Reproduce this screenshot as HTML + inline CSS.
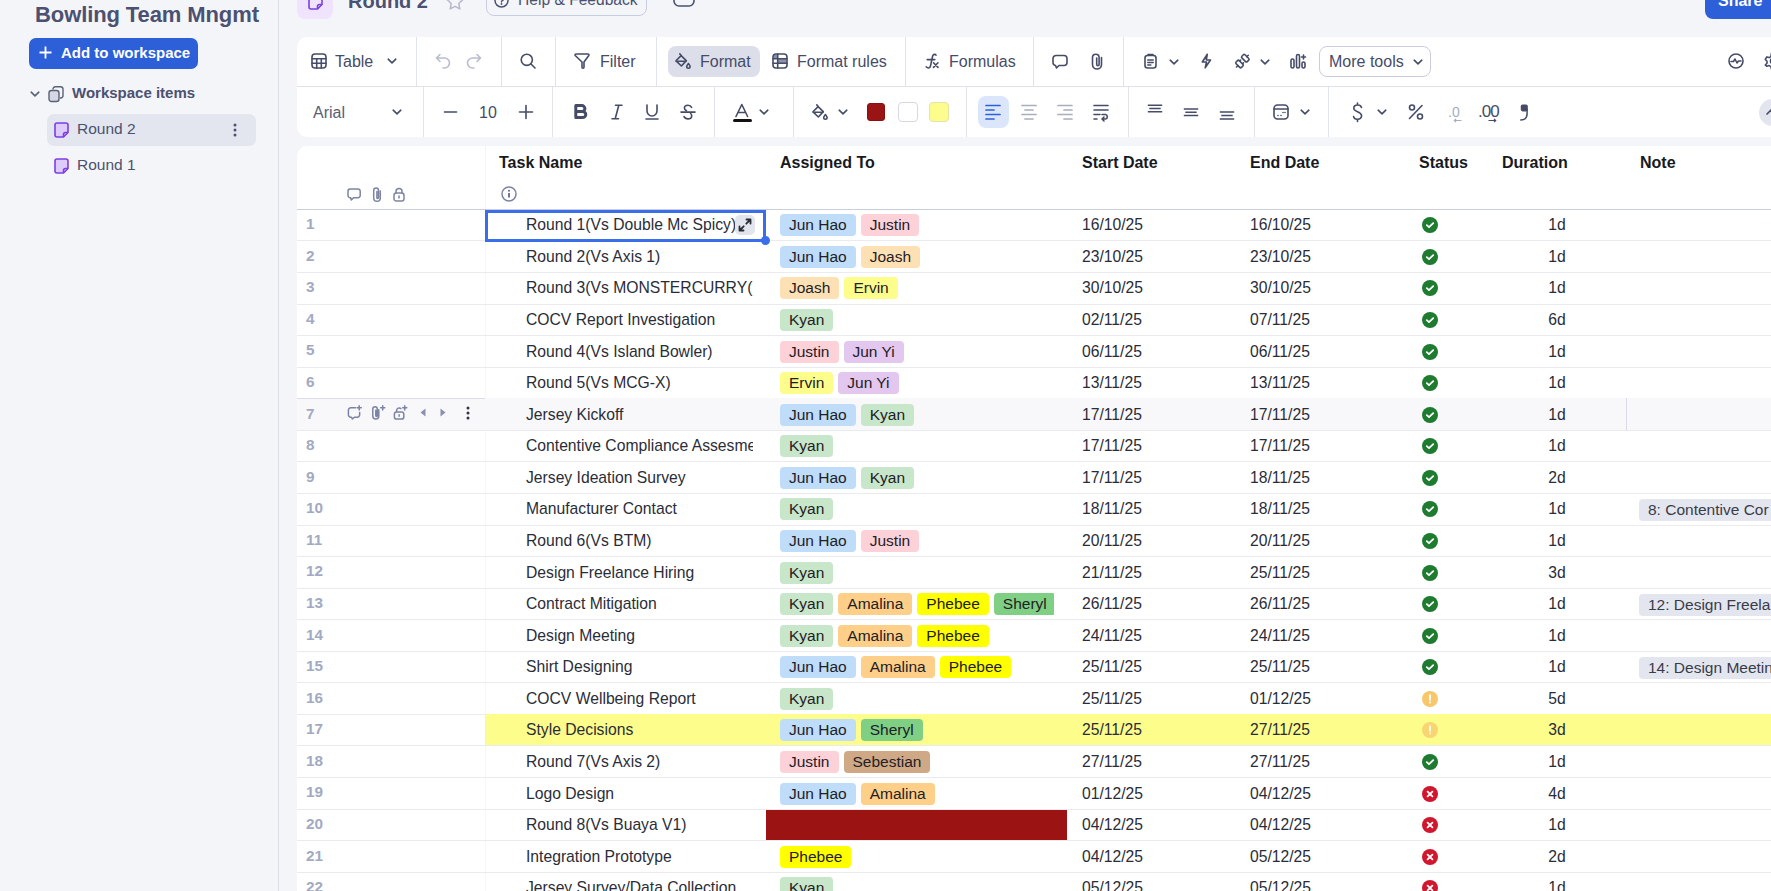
<!DOCTYPE html><html><head><meta charset="utf-8"><style>
*{box-sizing:border-box;margin:0;padding:0}
html,body{width:1771px;height:891px;overflow:hidden;background:#f4f5f9;font-family:"Liberation Sans",sans-serif;}
.a{position:absolute;white-space:nowrap}
.ic{position:absolute;overflow:visible}
.vd{position:absolute;width:1px;background:#e1e3ec}
.t16{font-size:16px;color:#464c68;line-height:20px}
.rn{position:absolute;white-space:nowrap;left:306px;font-size:15.3px;font-weight:700;color:#a4a9c2;line-height:16px}
.tk{position:absolute;left:526px;width:227px;overflow:hidden;white-space:nowrap;font-size:15.7px;color:#2a2d38;line-height:18px}
.dt{position:absolute;white-space:nowrap;font-size:15.7px;color:#2a2d38;line-height:18px}
.pill{position:absolute;height:22px;border-radius:4px;font-size:15.5px;line-height:22px;color:#1e2026;padding:0 9px;white-space:nowrap;overflow:hidden}
.jh{background:#bfdcf9}.ju{background:#fdd1d8}.jo{background:#fde0b4}.er{background:#fdfd8c}.ky{background:#c8e6c9}
.jy{background:#e3c7ef}.am{background:#fdcf88}.ph{background:#ffff00}.sh{background:#7fcf85}.se{background:#cfa885}
.hd{position:absolute;white-space:nowrap;top:153px;font-size:16px;font-weight:700;color:#171a22;line-height:20px}
.rl{position:absolute;left:297px;width:1474px;height:1px;background:#e9ebf1}
</style></head><body>
<div class="a" style="left:0;top:0;width:279px;height:891px;background:#f4f5f9;border-right:1px solid #dcdfe8"></div>
<div class="a" style="left:35px;top:2px;font-size:22px;font-weight:700;color:#4b5170;line-height:25px;letter-spacing:-0.1px">Bowling Team Mngmt</div>
<div class="a" style="left:29px;top:38px;width:169px;height:31px;border-radius:7px;background:#2c5fd8"></div>
<svg class="ic" style="left:39px;top:46px;width:13px;height:13px;" viewBox="0 0 13 13"><path d="M6.5 0.5v12M0.5 6.5h12" stroke="#fff" stroke-width="1.8"/></svg>
<div class="a" style="left:61px;top:44px;font-size:15px;font-weight:700;color:#fff;line-height:18px">Add to workspace</div>
<svg class="ic" style="left:30px;top:91px;width:10px;height:6px;" viewBox="0 0 10 6"><path d="M1.2 1.2l3.8 3.6 3.8-3.6" fill="none" stroke="#5a6078" stroke-width="1.6" stroke-linecap="round" stroke-linejoin="round"/></svg>
<svg class="ic" style="left:48px;top:86px;width:16px;height:16px;" viewBox="0 0 16 16"><rect x="1" y="4.5" width="10" height="11" rx="2.5" fill="#d5d8e3" stroke="#5a6078" stroke-width="1.4"/><path d="M5 3.5V3a2.2 2.2 0 0 1 2.2-2.2h5.3A2.5 2.5 0 0 1 15 3.3v6.4a2.3 2.3 0 0 1-2.3 2.3H12" fill="none" stroke="#5a6078" stroke-width="1.4"/></svg>
<div class="a" style="left:72px;top:84px;font-size:15px;font-weight:700;color:#4b5170;line-height:18px">Workspace items</div>
<div class="a" style="left:47px;top:114px;width:209px;height:32px;border-radius:7px;background:#e4e6ef"></div>
<svg class="ic" style="left:54px;top:122px;width:15px;height:16px;" viewBox="0 0 15 16"><path d="M3 1h9a2 2 0 0 1 2 2v7.5L9.5 15H3a2 2 0 0 1-2-2V3a2 2 0 0 1 2-2z" fill="#dccbfb" stroke="#7b3fe4" stroke-width="1.6"/><path d="M14 10.5h-2.5a2 2 0 0 0-2 2V15" fill="none" stroke="#7b3fe4" stroke-width="1.6"/></svg>
<div class="a" style="left:77px;top:120px;font-size:15.5px;color:#4b5170;line-height:18px">Round 2</div>
<svg class="ic" style="left:233px;top:123px;width:4px;height:14px;" viewBox="0 0 4 14"><circle cx="2" cy="2" r="1.5" fill="#4b5170"/><circle cx="2" cy="7" r="1.5" fill="#4b5170"/><circle cx="2" cy="12" r="1.5" fill="#4b5170"/></svg>
<svg class="ic" style="left:54px;top:158px;width:15px;height:16px;" viewBox="0 0 15 16"><path d="M3 1h9a2 2 0 0 1 2 2v7.5L9.5 15H3a2 2 0 0 1-2-2V3a2 2 0 0 1 2-2z" fill="#dccbfb" stroke="#7b3fe4" stroke-width="1.6"/><path d="M14 10.5h-2.5a2 2 0 0 0-2 2V15" fill="none" stroke="#7b3fe4" stroke-width="1.6"/></svg>
<div class="a" style="left:77px;top:156px;font-size:15.5px;color:#4b5170;line-height:18px">Round 1</div>
<div class="a" style="left:297px;top:-18px;width:36px;height:37px;border-radius:8px;background:#efe3fd"></div>
<svg class="ic" style="left:308px;top:-6px;width:15px;height:16px;" viewBox="0 0 15 16"><path d="M3 1h9a2 2 0 0 1 2 2v7.5L9.5 15H3a2 2 0 0 1-2-2V3a2 2 0 0 1 2-2z" fill="none" stroke="#7b3fe4" stroke-width="1.6"/><path d="M14 10.5h-2.5a2 2 0 0 0-2 2V15" fill="none" stroke="#7b3fe4" stroke-width="1.6"/></svg>
<div class="a" style="left:348px;top:-10.5px;font-size:20px;font-weight:700;color:#4b5170;line-height:23px">Round 2</div>
<svg class="ic" style="left:446px;top:-7px;width:18px;height:18px;" viewBox="0 0 18 18"><path d="M9 1l2.4 5 5.4.7-4 3.8 1 5.4L9 13.3 4.2 15.9l1-5.4-4-3.8 5.4-.7z" fill="none" stroke="#b5b9ca" stroke-width="1.5" stroke-linejoin="round"/></svg>
<div class="a" style="left:486px;top:-20px;width:161px;height:36px;border-radius:8px;border:1px solid #c9cde0"></div>
<svg class="ic" style="left:494px;top:-7px;width:15px;height:15px;" viewBox="0 0 15 15"><circle cx="7.5" cy="7.5" r="6.5" fill="none" stroke="#4b5170" stroke-width="1.5"/><path d="M5.5 5.8a2 2 0 1 1 2.8 1.8c-.6.3-.8.7-.8 1.4" fill="none" stroke="#4b5170" stroke-width="1.4" stroke-linecap="round"/><circle cx="7.5" cy="11" r=".9" fill="#4b5170"/></svg>
<div class="a" style="left:518px;top:-9.5px;font-size:15.6px;color:#4b5170;line-height:18px">Help &amp; Feedback</div>
<svg class="ic" style="left:673px;top:-10px;width:22px;height:17px;" viewBox="0 0 22 17"><rect x="1" y="1" width="20" height="15" rx="5" fill="none" stroke="#4b5170" stroke-width="1.6"/><path d="M7 6l4 3 4-3" fill="none" stroke="#4b5170" stroke-width="1.6"/></svg>
<div class="a" style="left:1705px;top:-20px;width:80px;height:39px;border-radius:8px;background:#2c5fd8"></div>
<div class="a" style="left:1718px;top:-8px;font-size:16px;font-weight:700;color:#fff;line-height:18px">Share</div>
<div class="a" style="left:297px;top:37px;width:1490px;height:100px;border-radius:10px;background:#fff"></div>
<div class="a" style="left:297px;top:86px;width:1474px;height:1px;background:#dfe2ec"></div>
<svg class="ic" style="left:311px;top:53px;width:16px;height:16px;" viewBox="0 0 16 16"><rect x="1" y="1" width="14" height="14" rx="3" fill="none" stroke="#464c68" stroke-width="1.6" stroke-linecap="round" stroke-linejoin="round"/><path d="M1 5.7h14M1 10.3h14M5.7 5.7V15M10.3 5.7V15" fill="none" stroke="#464c68" stroke-width="1.6" stroke-linecap="round" stroke-linejoin="round"/></svg>
<div class="a t16" style="left:335px;top:52px">Table</div>
<svg class="ic" style="left:387px;top:58px;width:10px;height:6px;" viewBox="0 0 10 6"><path d="M1.2 1.2l3.8 3.6 3.8-3.6" fill="none" stroke="#464c68" stroke-width="1.6" stroke-linecap="round" stroke-linejoin="round"/></svg>
<div class="vd" style="left:416px;top:37px;height:49px"></div>
<svg class="ic" style="left:435px;top:53px;width:16px;height:16px;" viewBox="0 0 16 16"><path d="M5 1.5L1.5 5 5 8.5M1.5 5h8a5 5 0 0 1 0 10H8" fill="none" stroke="#b9bdcb" stroke-width="1.6" stroke-linecap="round" stroke-linejoin="round"/></svg>
<svg class="ic" style="left:466px;top:53px;width:16px;height:16px;" viewBox="0 0 16 16"><path d="M11 1.5L14.5 5 11 8.5M14.5 5h-8a5 5 0 0 0 0 10H8" fill="none" stroke="#b9bdcb" stroke-width="1.6" stroke-linecap="round" stroke-linejoin="round"/></svg>
<div class="vd" style="left:501px;top:37px;height:49px"></div>
<svg class="ic" style="left:520px;top:53px;width:16px;height:16px;" viewBox="0 0 16 16"><circle cx="6.8" cy="6.8" r="5.6" fill="none" stroke="#464c68" stroke-width="1.6" stroke-linecap="round" stroke-linejoin="round"/><path d="M11 11l4 4" fill="none" stroke="#464c68" stroke-width="1.6" stroke-linecap="round" stroke-linejoin="round"/></svg>
<div class="vd" style="left:555px;top:37px;height:49px"></div>
<svg class="ic" style="left:574px;top:53px;width:16px;height:16px;" viewBox="0 0 16 16"><path d="M1.2 2.5a1 1 0 0 1 .9-1.5h11.8a1 1 0 0 1 .9 1.5L10 9v5.2a1 1 0 0 1-2 0V9z" fill="none" stroke="#464c68" stroke-width="1.6" stroke-linecap="round" stroke-linejoin="round"/></svg>
<div class="a t16" style="left:600px;top:52px">Filter</div>
<div class="vd" style="left:656px;top:37px;height:49px"></div>
<div class="a" style="left:668px;top:46px;width:92px;height:31px;border-radius:8px;background:#dcdfe9"></div>
<svg class="ic" style="left:675px;top:53px;width:17px;height:17px;" viewBox="0 0 17 17"><path d="M6.1 2.6L11.3 7.6 6.4 13 1 7.8z" fill="none" stroke="#464c68" stroke-width="1.6" stroke-linecap="round" stroke-linejoin="round"/><path d="M1.3 8.3h9.6M4.8 .9l1.4 1.6" fill="none" stroke="#464c68" stroke-width="1.6" stroke-linecap="round" stroke-linejoin="round"/><path d="M13.4 10.5c-.8 1.1-1.7 2.2-1.7 3.1a1.7 1.7 0 0 0 3.4 0c0-.9-.9-2-1.7-3.1z" fill="none" stroke="#464c68" stroke-width="1.6" stroke-linecap="round" stroke-linejoin="round" stroke-width="1.4"/></svg>
<div class="a t16" style="left:700px;top:52px">Format</div>
<svg class="ic" style="left:772px;top:53px;width:16px;height:16px;" viewBox="0 0 16 16"><rect x="1.5" y="1.5" width="4.2" height="4.2" fill="#8d92aa"/><rect x="5.7" y="5.7" width="8.8" height="4.6" fill="#8d92aa"/><rect x="1" y="1" width="14" height="14" rx="3" fill="none" stroke="#464c68" stroke-width="1.6" stroke-linecap="round" stroke-linejoin="round"/><path d="M1 5.7h14M1 10.3h14M5.7 1V15" fill="none" stroke="#464c68" stroke-width="1.6" stroke-linecap="round" stroke-linejoin="round"/></svg>
<div class="a t16" style="left:797px;top:52px">Format rules</div>
<div class="vd" style="left:905px;top:37px;height:49px"></div>
<svg class="ic" style="left:925px;top:53px;width:15px;height:16px;" viewBox="0 0 15 16"><path d="M11 2.2C10.4 1.2 9 1 8.2 2 7.7 2.6 7.5 3.5 7.3 4.5L5.6 12.6C5.3 14 4.6 15 3.4 15 2.5 15 1.8 14.5 1.2 13.8M2.2 6.6h7.6" fill="none" stroke="#464c68" stroke-width="1.6" stroke-linecap="round" stroke-linejoin="round" stroke-width="1.5"/><path d="M8.5 9.8l4.5 4.6M13 9.8l-4.5 4.6" fill="none" stroke="#464c68" stroke-width="1.6" stroke-linecap="round" stroke-linejoin="round" stroke-width="1.5"/></svg>
<div class="a t16" style="left:949px;top:52px">Formulas</div>
<div class="vd" style="left:1033px;top:37px;height:49px"></div>
<svg class="ic" style="left:1052px;top:54px;width:16px;height:15px;" viewBox="0 0 16 15"><path d="M4 1.5h8a3 3 0 0 1 3 3v4a3 3 0 0 1-3 3H7l-2.5 2.5-1-2.5A3 3 0 0 1 1 8.5v-4a3 3 0 0 1 3-3z" fill="none" stroke="#464c68" stroke-width="1.6" stroke-linecap="round" stroke-linejoin="round"/></svg>
<svg class="ic" style="left:1091px;top:53px;width:12px;height:17px;" viewBox="0 0 12 17"><path d="M10.5 4.5v7a4.5 4.5 0 0 1-9 0V4.5a3.3 3.3 0 0 1 6.6 0v7a1.2 1.2 0 0 1-2.4 0V5" fill="none" stroke="#464c68" stroke-width="1.6" stroke-linecap="round" stroke-linejoin="round"/></svg>
<div class="vd" style="left:1123px;top:37px;height:49px"></div>
<svg class="ic" style="left:1144px;top:53px;width:13px;height:16px;" viewBox="0 0 13 16"><rect x="1" y="2.5" width="11" height="12.5" rx="2.5" fill="none" stroke="#464c68" stroke-width="1.6" stroke-linecap="round" stroke-linejoin="round"/><path d="M4 1.5h5M3.8 7h5.4M3.8 9.5h5.4M3.8 12h3" fill="none" stroke="#464c68" stroke-width="1.6" stroke-linecap="round" stroke-linejoin="round"/></svg>
<svg class="ic" style="left:1169px;top:59px;width:10px;height:6px;" viewBox="0 0 10 6"><path d="M1.2 1.2l3.8 3.6 3.8-3.6" fill="none" stroke="#464c68" stroke-width="1.6" stroke-linecap="round" stroke-linejoin="round"/></svg>
<svg class="ic" style="left:1201px;top:53px;width:11px;height:16px;" viewBox="0 0 11 16"><path d="M6.3 1.2L1.3 9h4.2l-1.3 5.8 5.3-7.8H5.3z" fill="none" stroke="#464c68" stroke-width="1.6" stroke-linecap="round" stroke-linejoin="round" stroke-width="1.5"/></svg>
<svg class="ic" style="left:1234px;top:53px;width:16px;height:16px;" viewBox="0 0 16 16"><g transform="translate(8.4 8.1) rotate(-45)"><rect x="-6.3" y="-3.8" width="4.4" height="7.6" rx="1.2" fill="none" stroke="#464c68" stroke-width="1.6" stroke-linecap="round" stroke-linejoin="round"/><rect x="1.9" y="-3.8" width="4.4" height="7.6" rx="1.2" fill="none" stroke="#464c68" stroke-width="1.6" stroke-linecap="round" stroke-linejoin="round"/><path d="M-1.9 -2h1.4M-1.9 2h1.4M-6.3 0h-2M6.3 0h2" fill="none" stroke="#464c68" stroke-width="1.6" stroke-linecap="round" stroke-linejoin="round"/></g></svg>
<svg class="ic" style="left:1260px;top:59px;width:10px;height:6px;" viewBox="0 0 10 6"><path d="M1.2 1.2l3.8 3.6 3.8-3.6" fill="none" stroke="#464c68" stroke-width="1.6" stroke-linecap="round" stroke-linejoin="round"/></svg>
<svg class="ic" style="left:1290px;top:53px;width:17px;height:16px;" viewBox="0 0 17 16"><rect x="1" y="6" width="3" height="9" rx="1.5" fill="none" stroke="#464c68" stroke-width="1.6" stroke-linecap="round" stroke-linejoin="round"/><rect x="6.5" y="1.5" width="3" height="13.5" rx="1.5" fill="none" stroke="#464c68" stroke-width="1.6" stroke-linecap="round" stroke-linejoin="round"/><rect x="12" y="9" width="3" height="6" rx="1.5" fill="none" stroke="#464c68" stroke-width="1.6" stroke-linecap="round" stroke-linejoin="round"/><path d="M13.5 2v4M11.5 4h4" fill="none" stroke="#464c68" stroke-width="1.6" stroke-linecap="round" stroke-linejoin="round"/></svg>
<div class="a" style="left:1319px;top:46px;width:112px;height:31px;border-radius:8px;border:1px solid #c9cde0"></div>
<div class="a t16" style="left:1329px;top:52px">More tools</div>
<svg class="ic" style="left:1413px;top:59px;width:10px;height:6px;" viewBox="0 0 10 6"><path d="M1.2 1.2l3.8 3.6 3.8-3.6" fill="none" stroke="#464c68" stroke-width="1.6" stroke-linecap="round" stroke-linejoin="round"/></svg>
<svg class="ic" style="left:1728px;top:53px;width:16px;height:16px;" viewBox="0 0 16 16"><circle cx="8" cy="8" r="7" fill="none" stroke="#464c68" stroke-width="1.6" stroke-linecap="round" stroke-linejoin="round"/><path d="M3 8.5h2.5l1.5-2.5 2 4 1.5-2h2.5" fill="none" stroke="#464c68" stroke-width="1.6" stroke-linecap="round" stroke-linejoin="round"/></svg>
<svg class="ic" style="left:1764px;top:52px;width:18px;height:18px;" viewBox="0 0 18 18"><path d="M7.5 1h3l.6 2.3 1.8 1 2.3-.7 1.5 2.6-1.7 1.7v2.1l1.7 1.7-1.5 2.6-2.3-.7-1.8 1-.6 2.4h-3l-.6-2.4-1.8-1-2.3.7L1.3 13l1.7-1.7V9.2L1.3 7.5l1.5-2.6 2.3.7 1.8-1z" fill="none" stroke="#464c68" stroke-width="1.6" stroke-linecap="round" stroke-linejoin="round"/><circle cx="9" cy="9" r="2.5" fill="none" stroke="#464c68" stroke-width="1.6" stroke-linecap="round" stroke-linejoin="round"/></svg>
<div class="a" style="left:313px;top:103px;font-family:'Liberation Sans';font-size:16px;color:#5a6078;line-height:20px">Arial</div>
<svg class="ic" style="left:392px;top:109px;width:10px;height:6px;" viewBox="0 0 10 6"><path d="M1.2 1.2l3.8 3.6 3.8-3.6" fill="none" stroke="#464c68" stroke-width="1.6" stroke-linecap="round" stroke-linejoin="round"/></svg>
<div class="vd" style="left:423px;top:87px;height:50px"></div>
<svg class="ic" style="left:444px;top:111px;width:13px;height:2px;" viewBox="0 0 13 2"><path d="M.5 1h12" fill="none" stroke="#464c68" stroke-width="1.6" stroke-linecap="round" stroke-linejoin="round"/></svg>
<div class="a t16" style="left:479px;top:103px">10</div>
<svg class="ic" style="left:519px;top:105px;width:14px;height:14px;" viewBox="0 0 14 14"><path d="M7 .5v13M.5 7h13" fill="none" stroke="#464c68" stroke-width="1.6" stroke-linecap="round" stroke-linejoin="round"/></svg>
<div class="vd" style="left:552px;top:87px;height:50px"></div>
<svg class="ic" style="left:574px;top:104px;width:14px;height:15px;" viewBox="0 0 14 15"><path d="M1.8 1.6h6a3.1 3 0 0 1 0 6h-6zM1.8 7.4h6.7a3.3 3.1 0 0 1 0 6.2H1.8z" fill="none" stroke="#464c68" stroke-width="3" stroke-linejoin="round"/></svg>
<svg class="ic" style="left:611px;top:104px;width:12px;height:16px;" viewBox="0 0 12 16"><path d="M4.5 1.2h6.5M1 14.8h6.5M7.8 1.2L4.2 14.8" fill="none" stroke="#464c68" stroke-width="1.6" stroke-linecap="round"/></svg>
<svg class="ic" style="left:645px;top:104px;width:14px;height:16px;" viewBox="0 0 14 16"><path d="M2 1v6a5 5 0 0 0 10 0V1M1 15h12" fill="none" stroke="#464c68" stroke-width="1.6" stroke-linecap="round" stroke-linejoin="round"/></svg>
<svg class="ic" style="left:680px;top:104px;width:16px;height:16px;" viewBox="0 0 16 16"><path d="M11.6 3.3C11 2 9.7 1.2 8 1.2 5.9 1.2 4.4 2.4 4.4 4.1 4.4 5.3 5.2 6.2 6.5 6.8" fill="none" stroke="#464c68" stroke-width="1.6" stroke-linecap="round" stroke-linejoin="round"/><path d="M10.6 9.5c.7.6 1.1 1.3 1.1 2.3 0 1.8-1.6 3.1-3.7 3.1-1.9 0-3.3-.9-3.9-2.3" fill="none" stroke="#464c68" stroke-width="1.6" stroke-linecap="round" stroke-linejoin="round"/><path d="M1 8.1h14" fill="none" stroke="#464c68" stroke-width="1.6" stroke-linecap="round" stroke-linejoin="round"/></svg>
<div class="vd" style="left:714px;top:87px;height:50px"></div>
<svg class="ic" style="left:732px;top:102px;width:20px;height:22px;" viewBox="0 0 20 22"><path d="M4 14.5L9.8 2.5 15.6 14.5M5.8 10.5h8" fill="none" stroke="#464c68" stroke-width="1.6" stroke-linecap="round" stroke-linejoin="round"/><rect x="1" y="17" width="19" height="3" rx="1.5" fill="#111"/></svg>
<svg class="ic" style="left:759px;top:109px;width:10px;height:6px;" viewBox="0 0 10 6"><path d="M1.2 1.2l3.8 3.6 3.8-3.6" fill="none" stroke="#464c68" stroke-width="1.6" stroke-linecap="round" stroke-linejoin="round"/></svg>
<div class="vd" style="left:793px;top:87px;height:50px"></div>
<svg class="ic" style="left:812px;top:104px;width:17px;height:17px;" viewBox="0 0 17 17"><path d="M6.1 2.6L11.3 7.6 6.4 13 1 7.8z" fill="none" stroke="#464c68" stroke-width="1.6" stroke-linecap="round" stroke-linejoin="round"/><path d="M1.3 8.3h9.6M4.8 .9l1.4 1.6" fill="none" stroke="#464c68" stroke-width="1.6" stroke-linecap="round" stroke-linejoin="round"/><path d="M13.4 10.5c-.8 1.1-1.7 2.2-1.7 3.1a1.7 1.7 0 0 0 3.4 0c0-.9-.9-2-1.7-3.1z" fill="none" stroke="#464c68" stroke-width="1.6" stroke-linecap="round" stroke-linejoin="round" stroke-width="1.4"/></svg>
<svg class="ic" style="left:838px;top:109px;width:10px;height:6px;" viewBox="0 0 10 6"><path d="M1.2 1.2l3.8 3.6 3.8-3.6" fill="none" stroke="#464c68" stroke-width="1.6" stroke-linecap="round" stroke-linejoin="round"/></svg>
<div class="a" style="left:867px;top:103px;width:18px;height:18px;border-radius:3px;background:#9b1414;border:1px solid #8a1010"></div>
<div class="a" style="left:898px;top:102px;width:20px;height:20px;border-radius:4px;background:#fff;border:1px solid #d5d8e4"></div>
<div class="a" style="left:929px;top:102px;width:20px;height:20px;border-radius:4px;background:#fdfd8c;border:1px solid #e3e3b0"></div>
<div class="vd" style="left:966px;top:87px;height:50px"></div>
<div class="a" style="left:978px;top:96px;width:31px;height:32px;border-radius:8px;background:#dce6fb"></div>
<svg class="ic" style="left:985px;top:104px;width:16px;height:16px;" viewBox="0 0 16 16"><path d="M1 1.5h14M1 6h8M1 10.5h14M1 15h8" fill="none" stroke="#2f5fd9" stroke-width="1.7" stroke-linecap="round"/></svg>
<svg class="ic" style="left:1021px;top:104px;width:16px;height:16px;" viewBox="0 0 16 16"><path d="M1 1.5h14M4 6h8M1 10.5h14M4 15h8" fill="none" stroke="#a9adbc" stroke-width="1.7" stroke-linecap="round"/></svg>
<svg class="ic" style="left:1057px;top:104px;width:16px;height:16px;" viewBox="0 0 16 16"><path d="M1 1.5h14M7 6h8M1 10.5h14M7 15h8" fill="none" stroke="#a9adbc" stroke-width="1.7" stroke-linecap="round"/></svg>
<svg class="ic" style="left:1093px;top:104px;width:16px;height:16px;" viewBox="0 0 16 16"><path d="M1 1.5h14M1 6h14M1 10.5h6M1 15h3M10 15h2.5a2.3 2.3 0 0 0 0-4.5H9M11 13l-2 2 2 2" fill="none" stroke="#464c68" stroke-width="1.6" stroke-linecap="round" stroke-linejoin="round"/></svg>
<div class="vd" style="left:1128px;top:87px;height:50px"></div>
<svg class="ic" style="left:1147px;top:104px;width:16px;height:10px;" viewBox="0 0 16 10"><path d="M.8 1.2h14.4M2.3 4.5h11.4M.8 7.8h14.4" fill="none" stroke="#464c68" stroke-width="1.5"/></svg>
<svg class="ic" style="left:1183px;top:108px;width:16px;height:10px;" viewBox="0 0 16 10"><path d="M.8 .9h14.4M2.3 4.2h11.4M.8 7.5h14.4" fill="none" stroke="#464c68" stroke-width="1.5"/></svg>
<svg class="ic" style="left:1219px;top:111px;width:16px;height:10px;" viewBox="0 0 16 10"><path d="M.8 1h14.4M2.3 4.5h11.4M.8 8h14.4" fill="none" stroke="#464c68" stroke-width="1.5"/></svg>
<div class="vd" style="left:1254px;top:87px;height:50px"></div>
<svg class="ic" style="left:1273px;top:104px;width:16px;height:16px;" viewBox="0 0 16 16"><rect x="1" y="1" width="14" height="14" rx="3.5" fill="none" stroke="#464c68" stroke-width="1.6" stroke-linecap="round" stroke-linejoin="round"/><path d="M1 5h14" fill="none" stroke="#464c68" stroke-width="1.6" stroke-linecap="round" stroke-linejoin="round"/><circle cx="5" cy="11.5" r=".8" fill="#464c68"/><circle cx="8" cy="11.5" r=".8" fill="#464c68"/><circle cx="10" cy="8.5" r=".8" fill="#464c68"/><circle cx="12" cy="8.5" r=".8" fill="#464c68"/></svg>
<svg class="ic" style="left:1300px;top:109px;width:10px;height:6px;" viewBox="0 0 10 6"><path d="M1.2 1.2l3.8 3.6 3.8-3.6" fill="none" stroke="#464c68" stroke-width="1.6" stroke-linecap="round" stroke-linejoin="round"/></svg>
<div class="vd" style="left:1328px;top:87px;height:50px"></div>
<svg class="ic" style="left:1352px;top:102px;width:11px;height:21px;" viewBox="0 0 11 21"><path d="M9.5 5.5A3.8 3.5 0 0 0 5.5 3 3.8 3.3 0 0 0 1.8 6.3c0 4 7.8 3 7.8 7.5a3.8 3.5 0 0 1-4 3.5 3.8 3.5 0 0 1-4-2.7M5.5 1v2M5.5 17.3v2.2" fill="none" stroke="#464c68" stroke-width="1.6" stroke-linecap="round" stroke-linejoin="round"/></svg>
<svg class="ic" style="left:1377px;top:109px;width:10px;height:6px;" viewBox="0 0 10 6"><path d="M1.2 1.2l3.8 3.6 3.8-3.6" fill="none" stroke="#464c68" stroke-width="1.6" stroke-linecap="round" stroke-linejoin="round"/></svg>
<svg class="ic" style="left:1408px;top:104px;width:16px;height:16px;" viewBox="0 0 16 16"><path d="M14 1.5L1.5 14.5" fill="none" stroke="#464c68" stroke-width="1.6" stroke-linecap="round" stroke-linejoin="round" stroke-width="1.8"/><circle cx="4" cy="3.5" r="2.5" fill="none" stroke="#464c68" stroke-width="1.6" stroke-linecap="round" stroke-linejoin="round"/><circle cx="12" cy="12.5" r="2.5" fill="none" stroke="#464c68" stroke-width="1.6" stroke-linecap="round" stroke-linejoin="round"/></svg>
<div class="a" style="left:1448px;top:102px;font-size:14px;color:#a9adbc;line-height:20px">.0</div>
<svg class="ic" style="left:1452px;top:118px;width:10px;height:5px;" viewBox="0 0 10 5"><path d="M9.5 2.5h-7M4 .8L2.3 2.5 4 4.2" fill="none" stroke="#a9adbc" stroke-width="1.2"/></svg>
<div class="a" style="left:1478px;top:102px;font-size:17px;color:#464c68;line-height:20px;letter-spacing:-1px">.00</div>
<svg class="ic" style="left:1488px;top:118px;width:10px;height:5px;" viewBox="0 0 10 5"><path d="M.5 2.5h7M6 .8l1.7 1.7L6 4.2" fill="none" stroke="#464c68" stroke-width="1.2"/></svg>
<svg class="ic" style="left:1520px;top:104px;width:9px;height:17px;" viewBox="0 0 9 17"><rect x=".8" y=".4" width="7" height="7" rx="1.8" fill="#464c68"/><path d="M7.1 5v4.5c0 4.5-2.5 6.5-6.3 6.5" fill="none" stroke="#464c68" stroke-width="1.5" stroke-linecap="round"/></svg>
<div class="a" style="left:1759px;top:99px;width:28px;height:27px;border-radius:14px;background:#e3e5ee"></div>
<svg class="ic" style="left:1766px;top:109px;width:10px;height:6px;" viewBox="0 0 10 6"><path d="M1 5l4-4 4 4" fill="none" stroke="#464c68" stroke-width="1.7" stroke-linecap="round" stroke-linejoin="round"/></svg>
<div class="a" style="left:297px;top:146px;width:1490px;height:760px;border-radius:10px 10px 0 0;background:#fff"></div>
<div class="a" style="left:297px;top:209px;width:1474px;height:1px;background:#c9cddc"></div>
<div class="vd" style="left:485px;top:146px;height:63px;background:#f4f5f8"></div>
<div class="hd" style="left:499px">Task Name</div>
<div class="hd" style="left:780px">Assigned To</div>
<div class="hd" style="left:1082px">Start Date</div>
<div class="hd" style="left:1250px">End Date</div>
<div class="hd" style="left:1419px">Status</div>
<div class="hd" style="left:1502px">Duration</div>
<div class="hd" style="left:1640px">Note</div>
<svg class="ic" style="left:347px;top:188px;width:14px;height:13px;" viewBox="0 0 14 13"><path d="M3 1h8a2.2 2.2 0 0 1 2.2 2.2v4.3A2.2 2.2 0 0 1 11 9.7H6.5L4.3 12 3.6 9.7A2.2 2.2 0 0 1 1 7.5V3.2A2.2 2.2 0 0 1 3 1z" fill="none" stroke="#7d84a3" stroke-width="1.5" stroke-linecap="round" stroke-linejoin="round"/></svg>
<svg class="ic" style="left:372px;top:187px;width:10px;height:15px;" viewBox="0 0 10 15"><path d="M8.3 4v7a3.3 3.3 0 0 1-6.6 0V3.4a2.4 2.4 0 0 1 4.8 0v7.3a.8.8 0 0 1-1.6 0V4.6" fill="none" stroke="#7d84a3" stroke-width="1.5" stroke-linecap="round" stroke-linejoin="round" stroke-width="1.4"/></svg>
<svg class="ic" style="left:393px;top:187px;width:12px;height:15px;" viewBox="0 0 12 15"><rect x="1" y="6" width="10" height="8" rx="2.3" fill="none" stroke="#7d84a3" stroke-width="1.5" stroke-linecap="round" stroke-linejoin="round"/><path d="M3 6V4.5a3 3 0 0 1 6 0V6M6 9v2" fill="none" stroke="#7d84a3" stroke-width="1.5" stroke-linecap="round" stroke-linejoin="round"/></svg>
<svg class="ic" style="left:501px;top:186px;width:16px;height:16px;" viewBox="0 0 16 16"><circle cx="8" cy="8" r="7" fill="none" stroke="#7d84a3" stroke-width="1.5" stroke-linecap="round" stroke-linejoin="round" stroke="#5f6686"/><path d="M8 7v4.5" stroke="#5f6686" stroke-width="1.8"/><circle cx="8" cy="4.7" r="1" fill="#5f6686"/></svg>
<div class="vd" style="left:485px;top:210px;height:681px;background:#f7f7fa"></div>
<div class="rl" style="top:240.37px"></div>
<div class="rn" style="top:216.10px">1</div>
<div class="tk" style="top:216.30px">Round 1(Vs Double Mc Spicy)</div>
<div class="a" style="left:780px;top:214.30px;width:274px;height:22px;overflow:hidden;display:flex;gap:5px"><div class="pill jh" style="position:relative;flex:none">Jun Hao</div><div class="pill ju" style="position:relative;flex:none">Justin</div></div>
<div class="dt" style="left:1082px;top:216.30px">16/10/25</div>
<div class="dt" style="left:1250px;top:216.30px">16/10/25</div>
<svg class="ic" style="left:1422px;top:217.3px;width:16px;height:16px;" viewBox="0 0 16 16"><g><circle cx="8" cy="8" r="8" fill="#1e7b30"/><path d="M4.8 8.2l2.2 2 4.2-4" fill="none" stroke="#fff" stroke-width="1.8" stroke-linecap="round" stroke-linejoin="round"/></g></svg>
<div class="dt" style="left:1488px;width:138px;text-align:center;top:216.30px">1d</div>
<div class="rl" style="top:271.94px"></div>
<div class="rn" style="top:247.67px">2</div>
<div class="tk" style="top:247.87px">Round 2(Vs Axis 1)</div>
<div class="a" style="left:780px;top:245.87px;width:274px;height:22px;overflow:hidden;display:flex;gap:5px"><div class="pill jh" style="position:relative;flex:none">Jun Hao</div><div class="pill jo" style="position:relative;flex:none">Joash</div></div>
<div class="dt" style="left:1082px;top:247.87px">23/10/25</div>
<div class="dt" style="left:1250px;top:247.87px">23/10/25</div>
<svg class="ic" style="left:1422px;top:248.87px;width:16px;height:16px;" viewBox="0 0 16 16"><g><circle cx="8" cy="8" r="8" fill="#1e7b30"/><path d="M4.8 8.2l2.2 2 4.2-4" fill="none" stroke="#fff" stroke-width="1.8" stroke-linecap="round" stroke-linejoin="round"/></g></svg>
<div class="dt" style="left:1488px;width:138px;text-align:center;top:247.87px">1d</div>
<div class="rl" style="top:303.51px"></div>
<div class="rn" style="top:279.24px">3</div>
<div class="tk" style="top:279.44px">Round 3(Vs MONSTERCURRY(</div>
<div class="a" style="left:780px;top:277.44px;width:274px;height:22px;overflow:hidden;display:flex;gap:5px"><div class="pill jo" style="position:relative;flex:none">Joash</div><div class="pill er" style="position:relative;flex:none">Ervin</div></div>
<div class="dt" style="left:1082px;top:279.44px">30/10/25</div>
<div class="dt" style="left:1250px;top:279.44px">30/10/25</div>
<svg class="ic" style="left:1422px;top:280.44px;width:16px;height:16px;" viewBox="0 0 16 16"><g><circle cx="8" cy="8" r="8" fill="#1e7b30"/><path d="M4.8 8.2l2.2 2 4.2-4" fill="none" stroke="#fff" stroke-width="1.8" stroke-linecap="round" stroke-linejoin="round"/></g></svg>
<div class="dt" style="left:1488px;width:138px;text-align:center;top:279.44px">1d</div>
<div class="rl" style="top:335.08px"></div>
<div class="rn" style="top:310.81px">4</div>
<div class="tk" style="top:311.01px">COCV Report Investigation</div>
<div class="a" style="left:780px;top:309.01px;width:274px;height:22px;overflow:hidden;display:flex;gap:5px"><div class="pill ky" style="position:relative;flex:none">Kyan</div></div>
<div class="dt" style="left:1082px;top:311.01px">02/11/25</div>
<div class="dt" style="left:1250px;top:311.01px">07/11/25</div>
<svg class="ic" style="left:1422px;top:312.01px;width:16px;height:16px;" viewBox="0 0 16 16"><g><circle cx="8" cy="8" r="8" fill="#1e7b30"/><path d="M4.8 8.2l2.2 2 4.2-4" fill="none" stroke="#fff" stroke-width="1.8" stroke-linecap="round" stroke-linejoin="round"/></g></svg>
<div class="dt" style="left:1488px;width:138px;text-align:center;top:311.01px">6d</div>
<div class="rl" style="top:366.65px"></div>
<div class="rn" style="top:342.38px">5</div>
<div class="tk" style="top:342.58px">Round 4(Vs Island Bowler)</div>
<div class="a" style="left:780px;top:340.58px;width:274px;height:22px;overflow:hidden;display:flex;gap:5px"><div class="pill ju" style="position:relative;flex:none">Justin</div><div class="pill jy" style="position:relative;flex:none">Jun Yi</div></div>
<div class="dt" style="left:1082px;top:342.58px">06/11/25</div>
<div class="dt" style="left:1250px;top:342.58px">06/11/25</div>
<svg class="ic" style="left:1422px;top:343.58px;width:16px;height:16px;" viewBox="0 0 16 16"><g><circle cx="8" cy="8" r="8" fill="#1e7b30"/><path d="M4.8 8.2l2.2 2 4.2-4" fill="none" stroke="#fff" stroke-width="1.8" stroke-linecap="round" stroke-linejoin="round"/></g></svg>
<div class="dt" style="left:1488px;width:138px;text-align:center;top:342.58px">1d</div>
<div class="rl" style="top:398.22px"></div>
<div class="rn" style="top:373.95px">6</div>
<div class="tk" style="top:374.15px">Round 5(Vs MCG-X)</div>
<div class="a" style="left:780px;top:372.15px;width:274px;height:22px;overflow:hidden;display:flex;gap:5px"><div class="pill er" style="position:relative;flex:none">Ervin</div><div class="pill jy" style="position:relative;flex:none">Jun Yi</div></div>
<div class="dt" style="left:1082px;top:374.15px">13/11/25</div>
<div class="dt" style="left:1250px;top:374.15px">13/11/25</div>
<svg class="ic" style="left:1422px;top:375.15px;width:16px;height:16px;" viewBox="0 0 16 16"><g><circle cx="8" cy="8" r="8" fill="#1e7b30"/><path d="M4.8 8.2l2.2 2 4.2-4" fill="none" stroke="#fff" stroke-width="1.8" stroke-linecap="round" stroke-linejoin="round"/></g></svg>
<div class="dt" style="left:1488px;width:138px;text-align:center;top:374.15px">1d</div>
<div class="a" style="left:297px;top:398.22px;width:1474px;height:31.57px;background:#f8f8fa"></div>
<div class="vd" style="left:1626px;top:398.22px;height:31.57px;background:#d9dce6"></div>
<div class="a" style="left:297px;top:397.72px;width:188px;height:1px;background:#dadde8"></div>
<div class="a" style="left:297px;top:429.79px;width:188px;height:1px;background:#dadde8"></div>
<div class="rl" style="top:429.79px"></div>
<div class="rn" style="top:405.52px">7</div>
<div class="tk" style="top:405.72px">Jersey Kickoff</div>
<div class="a" style="left:780px;top:403.72px;width:274px;height:22px;overflow:hidden;display:flex;gap:5px"><div class="pill jh" style="position:relative;flex:none">Jun Hao</div><div class="pill ky" style="position:relative;flex:none">Kyan</div></div>
<div class="dt" style="left:1082px;top:405.72px">17/11/25</div>
<div class="dt" style="left:1250px;top:405.72px">17/11/25</div>
<svg class="ic" style="left:1422px;top:406.72px;width:16px;height:16px;" viewBox="0 0 16 16"><g><circle cx="8" cy="8" r="8" fill="#1e7b30"/><path d="M4.8 8.2l2.2 2 4.2-4" fill="none" stroke="#fff" stroke-width="1.8" stroke-linecap="round" stroke-linejoin="round"/></g></svg>
<div class="dt" style="left:1488px;width:138px;text-align:center;top:405.72px">1d</div>
<div class="rl" style="top:461.36px"></div>
<div class="rn" style="top:437.09px">8</div>
<div class="tk" style="top:437.29px">Contentive Compliance Assesme</div>
<div class="a" style="left:780px;top:435.29px;width:274px;height:22px;overflow:hidden;display:flex;gap:5px"><div class="pill ky" style="position:relative;flex:none">Kyan</div></div>
<div class="dt" style="left:1082px;top:437.29px">17/11/25</div>
<div class="dt" style="left:1250px;top:437.29px">17/11/25</div>
<svg class="ic" style="left:1422px;top:438.29px;width:16px;height:16px;" viewBox="0 0 16 16"><g><circle cx="8" cy="8" r="8" fill="#1e7b30"/><path d="M4.8 8.2l2.2 2 4.2-4" fill="none" stroke="#fff" stroke-width="1.8" stroke-linecap="round" stroke-linejoin="round"/></g></svg>
<div class="dt" style="left:1488px;width:138px;text-align:center;top:437.29px">1d</div>
<div class="rl" style="top:492.93px"></div>
<div class="rn" style="top:468.66px">9</div>
<div class="tk" style="top:468.86px">Jersey Ideation Survey</div>
<div class="a" style="left:780px;top:466.86px;width:274px;height:22px;overflow:hidden;display:flex;gap:5px"><div class="pill jh" style="position:relative;flex:none">Jun Hao</div><div class="pill ky" style="position:relative;flex:none">Kyan</div></div>
<div class="dt" style="left:1082px;top:468.86px">17/11/25</div>
<div class="dt" style="left:1250px;top:468.86px">18/11/25</div>
<svg class="ic" style="left:1422px;top:469.86px;width:16px;height:16px;" viewBox="0 0 16 16"><g><circle cx="8" cy="8" r="8" fill="#1e7b30"/><path d="M4.8 8.2l2.2 2 4.2-4" fill="none" stroke="#fff" stroke-width="1.8" stroke-linecap="round" stroke-linejoin="round"/></g></svg>
<div class="dt" style="left:1488px;width:138px;text-align:center;top:468.86px">2d</div>
<div class="rl" style="top:524.50px"></div>
<div class="rn" style="top:500.23px">10</div>
<div class="tk" style="top:500.43px">Manufacturer Contact</div>
<div class="a" style="left:780px;top:498.43px;width:274px;height:22px;overflow:hidden;display:flex;gap:5px"><div class="pill ky" style="position:relative;flex:none">Kyan</div></div>
<div class="dt" style="left:1082px;top:500.43px">18/11/25</div>
<div class="dt" style="left:1250px;top:500.43px">18/11/25</div>
<svg class="ic" style="left:1422px;top:501.43px;width:16px;height:16px;" viewBox="0 0 16 16"><g><circle cx="8" cy="8" r="8" fill="#1e7b30"/><path d="M4.8 8.2l2.2 2 4.2-4" fill="none" stroke="#fff" stroke-width="1.8" stroke-linecap="round" stroke-linejoin="round"/></g></svg>
<div class="dt" style="left:1488px;width:138px;text-align:center;top:500.43px">1d</div>
<div class="pill" style="left:1639px;top:498.93px;background:#e4e6ef;color:#393c47">8: Contentive Cor</div>
<div class="rl" style="top:556.07px"></div>
<div class="rn" style="top:531.80px">11</div>
<div class="tk" style="top:532.00px">Round 6(Vs BTM)</div>
<div class="a" style="left:780px;top:530.00px;width:274px;height:22px;overflow:hidden;display:flex;gap:5px"><div class="pill jh" style="position:relative;flex:none">Jun Hao</div><div class="pill ju" style="position:relative;flex:none">Justin</div></div>
<div class="dt" style="left:1082px;top:532.00px">20/11/25</div>
<div class="dt" style="left:1250px;top:532.00px">20/11/25</div>
<svg class="ic" style="left:1422px;top:533.0px;width:16px;height:16px;" viewBox="0 0 16 16"><g><circle cx="8" cy="8" r="8" fill="#1e7b30"/><path d="M4.8 8.2l2.2 2 4.2-4" fill="none" stroke="#fff" stroke-width="1.8" stroke-linecap="round" stroke-linejoin="round"/></g></svg>
<div class="dt" style="left:1488px;width:138px;text-align:center;top:532.00px">1d</div>
<div class="rl" style="top:587.64px"></div>
<div class="rn" style="top:563.37px">12</div>
<div class="tk" style="top:563.57px">Design Freelance Hiring</div>
<div class="a" style="left:780px;top:561.57px;width:274px;height:22px;overflow:hidden;display:flex;gap:5px"><div class="pill ky" style="position:relative;flex:none">Kyan</div></div>
<div class="dt" style="left:1082px;top:563.57px">21/11/25</div>
<div class="dt" style="left:1250px;top:563.57px">25/11/25</div>
<svg class="ic" style="left:1422px;top:564.57px;width:16px;height:16px;" viewBox="0 0 16 16"><g><circle cx="8" cy="8" r="8" fill="#1e7b30"/><path d="M4.8 8.2l2.2 2 4.2-4" fill="none" stroke="#fff" stroke-width="1.8" stroke-linecap="round" stroke-linejoin="round"/></g></svg>
<div class="dt" style="left:1488px;width:138px;text-align:center;top:563.57px">3d</div>
<div class="rl" style="top:619.21px"></div>
<div class="rn" style="top:594.94px">13</div>
<div class="tk" style="top:595.14px">Contract Mitigation</div>
<div class="a" style="left:780px;top:593.14px;width:274px;height:22px;overflow:hidden;display:flex;gap:5px"><div class="pill ky" style="position:relative;flex:none">Kyan</div><div class="pill am" style="position:relative;flex:none">Amalina</div><div class="pill ph" style="position:relative;flex:none">Phebee</div><div class="pill sh" style="position:relative;flex:none">Sheryl</div></div>
<div class="dt" style="left:1082px;top:595.14px">26/11/25</div>
<div class="dt" style="left:1250px;top:595.14px">26/11/25</div>
<svg class="ic" style="left:1422px;top:596.14px;width:16px;height:16px;" viewBox="0 0 16 16"><g><circle cx="8" cy="8" r="8" fill="#1e7b30"/><path d="M4.8 8.2l2.2 2 4.2-4" fill="none" stroke="#fff" stroke-width="1.8" stroke-linecap="round" stroke-linejoin="round"/></g></svg>
<div class="dt" style="left:1488px;width:138px;text-align:center;top:595.14px">1d</div>
<div class="pill" style="left:1639px;top:593.64px;background:#e4e6ef;color:#393c47">12: Design Freela</div>
<div class="rl" style="top:650.78px"></div>
<div class="rn" style="top:626.51px">14</div>
<div class="tk" style="top:626.71px">Design Meeting</div>
<div class="a" style="left:780px;top:624.71px;width:274px;height:22px;overflow:hidden;display:flex;gap:5px"><div class="pill ky" style="position:relative;flex:none">Kyan</div><div class="pill am" style="position:relative;flex:none">Amalina</div><div class="pill ph" style="position:relative;flex:none">Phebee</div></div>
<div class="dt" style="left:1082px;top:626.71px">24/11/25</div>
<div class="dt" style="left:1250px;top:626.71px">24/11/25</div>
<svg class="ic" style="left:1422px;top:627.71px;width:16px;height:16px;" viewBox="0 0 16 16"><g><circle cx="8" cy="8" r="8" fill="#1e7b30"/><path d="M4.8 8.2l2.2 2 4.2-4" fill="none" stroke="#fff" stroke-width="1.8" stroke-linecap="round" stroke-linejoin="round"/></g></svg>
<div class="dt" style="left:1488px;width:138px;text-align:center;top:626.71px">1d</div>
<div class="rl" style="top:682.35px"></div>
<div class="rn" style="top:658.08px">15</div>
<div class="tk" style="top:658.28px">Shirt Designing</div>
<div class="a" style="left:780px;top:656.28px;width:274px;height:22px;overflow:hidden;display:flex;gap:5px"><div class="pill jh" style="position:relative;flex:none">Jun Hao</div><div class="pill am" style="position:relative;flex:none">Amalina</div><div class="pill ph" style="position:relative;flex:none">Phebee</div></div>
<div class="dt" style="left:1082px;top:658.28px">25/11/25</div>
<div class="dt" style="left:1250px;top:658.28px">25/11/25</div>
<svg class="ic" style="left:1422px;top:659.28px;width:16px;height:16px;" viewBox="0 0 16 16"><g><circle cx="8" cy="8" r="8" fill="#1e7b30"/><path d="M4.8 8.2l2.2 2 4.2-4" fill="none" stroke="#fff" stroke-width="1.8" stroke-linecap="round" stroke-linejoin="round"/></g></svg>
<div class="dt" style="left:1488px;width:138px;text-align:center;top:658.28px">1d</div>
<div class="pill" style="left:1639px;top:656.78px;background:#e4e6ef;color:#393c47">14: Design Meetin</div>
<div class="rl" style="top:713.92px"></div>
<div class="rn" style="top:689.65px">16</div>
<div class="tk" style="top:689.85px">COCV Wellbeing Report</div>
<div class="a" style="left:780px;top:687.85px;width:274px;height:22px;overflow:hidden;display:flex;gap:5px"><div class="pill ky" style="position:relative;flex:none">Kyan</div></div>
<div class="dt" style="left:1082px;top:689.85px">25/11/25</div>
<div class="dt" style="left:1250px;top:689.85px">01/12/25</div>
<svg class="ic" style="left:1422px;top:690.85px;width:16px;height:16px;" viewBox="0 0 16 16"><g><circle cx="8" cy="8" r="8" fill="#f8c76b"/><path d="M8 4.3v4.6" stroke="#fff" stroke-width="1.9" stroke-linecap="round"/><circle cx="8" cy="11.6" r="1" fill="#fff"/></g></svg>
<div class="dt" style="left:1488px;width:138px;text-align:center;top:689.85px">5d</div>
<div class="a" style="left:485px;top:714.42px;width:1286px;height:31.07px;background:#fdfd8c"></div>
<div class="rl" style="top:745.49px"></div>
<div class="rn" style="top:721.22px">17</div>
<div class="tk" style="top:721.42px">Style Decisions</div>
<div class="a" style="left:780px;top:719.42px;width:274px;height:22px;overflow:hidden;display:flex;gap:5px"><div class="pill jh" style="position:relative;flex:none">Jun Hao</div><div class="pill sh" style="position:relative;flex:none">Sheryl</div></div>
<div class="dt" style="left:1082px;top:721.42px">25/11/25</div>
<div class="dt" style="left:1250px;top:721.42px">27/11/25</div>
<svg class="ic" style="left:1422px;top:722.42px;width:16px;height:16px;" viewBox="0 0 16 16"><g opacity="0.75"><circle cx="8" cy="8" r="8" fill="#f8c76b"/><path d="M8 4.3v4.6" stroke="#fff" stroke-width="1.9" stroke-linecap="round"/><circle cx="8" cy="11.6" r="1" fill="#fff"/></g></svg>
<div class="dt" style="left:1488px;width:138px;text-align:center;top:721.42px">3d</div>
<div class="rl" style="top:777.06px"></div>
<div class="rn" style="top:752.79px">18</div>
<div class="tk" style="top:752.99px">Round 7(Vs Axis 2)</div>
<div class="a" style="left:780px;top:750.99px;width:274px;height:22px;overflow:hidden;display:flex;gap:5px"><div class="pill ju" style="position:relative;flex:none">Justin</div><div class="pill se" style="position:relative;flex:none">Sebestian</div></div>
<div class="dt" style="left:1082px;top:752.99px">27/11/25</div>
<div class="dt" style="left:1250px;top:752.99px">27/11/25</div>
<svg class="ic" style="left:1422px;top:753.99px;width:16px;height:16px;" viewBox="0 0 16 16"><g><circle cx="8" cy="8" r="8" fill="#1e7b30"/><path d="M4.8 8.2l2.2 2 4.2-4" fill="none" stroke="#fff" stroke-width="1.8" stroke-linecap="round" stroke-linejoin="round"/></g></svg>
<div class="dt" style="left:1488px;width:138px;text-align:center;top:752.99px">1d</div>
<div class="rl" style="top:808.63px"></div>
<div class="rn" style="top:784.36px">19</div>
<div class="tk" style="top:784.56px">Logo Design</div>
<div class="a" style="left:780px;top:782.56px;width:274px;height:22px;overflow:hidden;display:flex;gap:5px"><div class="pill jh" style="position:relative;flex:none">Jun Hao</div><div class="pill am" style="position:relative;flex:none">Amalina</div></div>
<div class="dt" style="left:1082px;top:784.56px">01/12/25</div>
<div class="dt" style="left:1250px;top:784.56px">04/12/25</div>
<svg class="ic" style="left:1422px;top:785.56px;width:16px;height:16px;" viewBox="0 0 16 16"><g><circle cx="8" cy="8" r="8" fill="#d1172d"/><path d="M5.6 5.6l4.8 4.8M10.4 5.6l-4.8 4.8" stroke="#fff" stroke-width="1.8" stroke-linecap="round"/></g></svg>
<div class="dt" style="left:1488px;width:138px;text-align:center;top:784.56px">4d</div>
<div class="a" style="left:766px;top:809.63px;width:301px;height:30.57px;background:#9b1313"></div>
<div class="rl" style="top:840.20px"></div>
<div class="rn" style="top:815.93px">20</div>
<div class="tk" style="top:816.13px">Round 8(Vs Buaya V1)</div>
<div class="dt" style="left:1082px;top:816.13px">04/12/25</div>
<div class="dt" style="left:1250px;top:816.13px">04/12/25</div>
<svg class="ic" style="left:1422px;top:817.13px;width:16px;height:16px;" viewBox="0 0 16 16"><g><circle cx="8" cy="8" r="8" fill="#d1172d"/><path d="M5.6 5.6l4.8 4.8M10.4 5.6l-4.8 4.8" stroke="#fff" stroke-width="1.8" stroke-linecap="round"/></g></svg>
<div class="dt" style="left:1488px;width:138px;text-align:center;top:816.13px">1d</div>
<div class="rl" style="top:871.77px"></div>
<div class="rn" style="top:847.50px">21</div>
<div class="tk" style="top:847.70px">Integration Prototype</div>
<div class="a" style="left:780px;top:845.70px;width:274px;height:22px;overflow:hidden;display:flex;gap:5px"><div class="pill ph" style="position:relative;flex:none">Phebee</div></div>
<div class="dt" style="left:1082px;top:847.70px">04/12/25</div>
<div class="dt" style="left:1250px;top:847.70px">05/12/25</div>
<svg class="ic" style="left:1422px;top:848.7px;width:16px;height:16px;" viewBox="0 0 16 16"><g><circle cx="8" cy="8" r="8" fill="#d1172d"/><path d="M5.6 5.6l4.8 4.8M10.4 5.6l-4.8 4.8" stroke="#fff" stroke-width="1.8" stroke-linecap="round"/></g></svg>
<div class="dt" style="left:1488px;width:138px;text-align:center;top:847.70px">2d</div>
<div class="rl" style="top:903.34px"></div>
<div class="rn" style="top:879.07px">22</div>
<div class="tk" style="top:879.27px">Jersey Survey/Data Collection</div>
<div class="a" style="left:780px;top:877.27px;width:274px;height:22px;overflow:hidden;display:flex;gap:5px"><div class="pill ky" style="position:relative;flex:none">Kyan</div></div>
<div class="dt" style="left:1082px;top:879.27px">05/12/25</div>
<div class="dt" style="left:1250px;top:879.27px">05/12/25</div>
<svg class="ic" style="left:1422px;top:880.27px;width:16px;height:16px;" viewBox="0 0 16 16"><g><circle cx="8" cy="8" r="8" fill="#d1172d"/><path d="M5.6 5.6l4.8 4.8M10.4 5.6l-4.8 4.8" stroke="#fff" stroke-width="1.8" stroke-linecap="round"/></g></svg>
<div class="dt" style="left:1488px;width:138px;text-align:center;top:879.27px">1d</div>
<div class="a" style="left:485px;top:210.30px;width:281px;height:31.37px;border:3px solid #3a6ee8"></div>
<div class="a" style="left:735px;top:214.80px;width:20px;height:20px;border-radius:5px;background:#e3e5ee"></div>
<svg class="ic" style="left:738px;top:217.8px;width:14px;height:14px;" viewBox="0 0 14 14"><path d="M8.5 1.5h4v4M12.5 1.5L8.3 5.7M5.5 12.5h-4v-4M1.5 12.5l4.2-4.2" fill="none" stroke="#2a2d38" stroke-width="1.8" stroke-linecap="round" stroke-linejoin="round"/></svg>
<div class="a" style="left:760.5px;top:235.87px;width:9px;height:9px;border-radius:5px;background:#3a6ee8"></div>
<svg class="ic" style="left:347px;top:404.72px;width:15px;height:15px;" viewBox="0 0 16 16"><path d="M9 3H4a2.5 2.5 0 0 0-2.5 2.5v5A2.5 2.5 0 0 0 4 13h.8l.9 2 2.2-2H11a2.5 2.5 0 0 0 2.5-2.5V8" fill="none" stroke="#7d84a3" stroke-width="1.6" stroke-linecap="round" stroke-linejoin="round"/><path d="M13 .8v4.4M10.8 3h4.4" fill="none" stroke="#7d84a3" stroke-width="1.6" stroke-linecap="round" stroke-linejoin="round"/></svg>
<svg class="ic" style="left:371px;top:404.72px;width:15px;height:15px;" viewBox="0 0 16 16"><path d="M8.3 5v6.8a3.2 3.2 0 0 1-6.4 0V4.3a2.4 2.4 0 0 1 4.8 0v7.2a.8.8 0 0 1-1.6 0V5.5" fill="none" stroke="#7d84a3" stroke-width="1.6" stroke-linecap="round" stroke-linejoin="round" stroke-width="1.4"/><path d="M12.5 .8v4.4M10.3 3h4.4" fill="none" stroke="#7d84a3" stroke-width="1.6" stroke-linecap="round" stroke-linejoin="round"/></svg>
<svg class="ic" style="left:393px;top:404.72px;width:15px;height:15px;" viewBox="0 0 16 16"><rect x="1.5" y="7.5" width="10" height="7.5" rx="2.3" fill="none" stroke="#7d84a3" stroke-width="1.6" stroke-linecap="round" stroke-linejoin="round"/><path d="M3.8 7.5V5.8a2.8 2.8 0 0 1 4.6-2M6.5 10.3v1.8" fill="none" stroke="#7d84a3" stroke-width="1.6" stroke-linecap="round" stroke-linejoin="round"/><path d="M12.5 .8v4.4M10.3 3h4.4" fill="none" stroke="#7d84a3" stroke-width="1.6" stroke-linecap="round" stroke-linejoin="round"/></svg>
<svg class="ic" style="left:420px;top:407.72px;width:6px;height:9px;" viewBox="0 0 6 9"><path d="M5.5 .5v8L.5 4.5z" fill="#8a90ad"/></svg>
<svg class="ic" style="left:440px;top:407.72px;width:6px;height:9px;" viewBox="0 0 6 9"><path d="M.5 .5v8l5-4z" fill="#8a90ad"/></svg>
<svg class="ic" style="left:466px;top:406.22px;width:4px;height:14px;" viewBox="0 0 4 14"><circle cx="2" cy="2" r="1.5" fill="#30343f"/><circle cx="2" cy="7" r="1.5" fill="#30343f"/><circle cx="2" cy="12" r="1.5" fill="#30343f"/></svg>
</body></html>
